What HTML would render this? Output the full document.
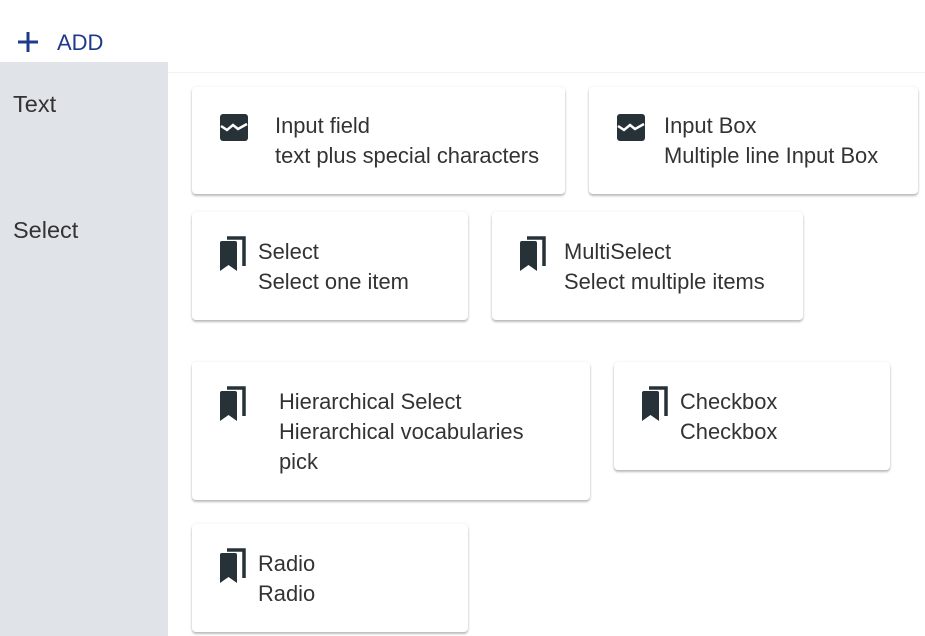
<!DOCTYPE html><html><head><style>
body{margin:0;width:925px;height:636px;background:#fff;font-family:"Liberation Sans",sans-serif;color:#333;overflow:hidden;position:relative}
.add{position:absolute;left:16px;top:28px;color:#1e3a8a;font-size:22px}
.add span{position:absolute;left:41px;top:2px}
.side{position:absolute;left:0;top:62px;width:168px;height:574px;background:#e0e3e8}
.line{position:absolute;left:168px;top:72px;right:0;height:1px;background:#f2f2f2}
.lab{position:absolute;left:13px;font-size:23.5px;color:#333}
.card{position:absolute;background:#fff;border-radius:4px;box-shadow:0 2px 2px rgba(0,0,0,.25),0 0 3px rgba(0,0,0,.08)}
.t{position:absolute;font-size:21.9px;line-height:30px;color:#333;white-space:nowrap}
svg{position:absolute}
</style></head><body>
<div class="add"><svg width="24" height="24" style="left:0;top:2px" viewBox="0 0 24 24"><path d="M12 2v20M2 12h20" stroke="#1e3a8a" stroke-width="3"/></svg><span>ADD</span></div>
<div class="side"></div><div class="line"></div>
<div class="lab" style="top:91px">Text</div>
<div class="lab" style="top:217px">Select</div>

<div class="card" style="left:192px;top:87px;width:373px;height:107px"></div>
<div class="card" style="left:589px;top:87px;width:329px;height:107px"></div>
<div class="card" style="left:192px;top:212px;width:276px;height:108px"></div>
<div class="card" style="left:492px;top:212px;width:311px;height:108px"></div>
<div class="card" style="left:192px;top:362px;width:398px;height:138px"></div>
<div class="card" style="left:614px;top:362px;width:276px;height:108px"></div>
<div class="card" style="left:192px;top:524px;width:276px;height:108px"></div>

<svg width="28" height="28" style="left:220px;top:114px" viewBox="0 0 28 28"><rect x="0" y="0" width="28" height="27" rx="3" fill="#263238"/><path d="M1 12l6 4 6-5 5 4 9-5" stroke="#fff" stroke-width="2.5" fill="none"/></svg>
<svg width="28" height="28" style="left:617px;top:114px" viewBox="0 0 28 28"><rect x="0" y="0" width="28" height="27" rx="3" fill="#263238"/><path d="M1 12l6 4 6-5 5 4 9-5" stroke="#fff" stroke-width="2.5" fill="none"/></svg>

<div class="t" style="left:275px;top:111px">Input field<br>text plus special characters</div>
<div class="t" style="left:664px;top:111px">Input Box<br>Multiple line Input Box</div>
<div class="t" style="left:258px;top:237px">Select<br>Select one item</div>
<div class="t" style="left:564px;top:237px">MultiSelect<br>Select multiple items</div>
<div class="t" style="left:279px;top:387px">Hierarchical Select<br>Hierarchical vocabularies<br>pick</div>
<div class="t" style="left:680px;top:387px">Checkbox<br>Checkbox</div>
<div class="t" style="left:258px;top:549px">Radio<br>Radio</div>

<svg width="30" height="36" style="left:219px;top:235px" viewBox="0 0 30 36"><path d="M8 3h17v28" stroke="#263238" stroke-width="3.5" fill="none"/><path d="M1 8a2 2 0 012-2h13a2 2 0 012 2v28l-8.5-6-8.5 6z" fill="#263238"/></svg>
<svg width="30" height="36" style="left:519px;top:235px" viewBox="0 0 30 36"><path d="M8 3h17v28" stroke="#263238" stroke-width="3.5" fill="none"/><path d="M1 8a2 2 0 012-2h13a2 2 0 012 2v28l-8.5-6-8.5 6z" fill="#263238"/></svg>
<svg width="30" height="36" style="left:219px;top:385px" viewBox="0 0 30 36"><path d="M8 3h17v28" stroke="#263238" stroke-width="3.5" fill="none"/><path d="M1 8a2 2 0 012-2h13a2 2 0 012 2v28l-8.5-6-8.5 6z" fill="#263238"/></svg>
<svg width="30" height="36" style="left:641px;top:385px" viewBox="0 0 30 36"><path d="M8 3h17v28" stroke="#263238" stroke-width="3.5" fill="none"/><path d="M1 8a2 2 0 012-2h13a2 2 0 012 2v28l-8.5-6-8.5 6z" fill="#263238"/></svg>
<svg width="30" height="36" style="left:219px;top:547px" viewBox="0 0 30 36"><path d="M8 3h17v28" stroke="#263238" stroke-width="3.5" fill="none"/><path d="M1 8a2 2 0 012-2h13a2 2 0 012 2v28l-8.5-6-8.5 6z" fill="#263238"/></svg>
</body></html>
